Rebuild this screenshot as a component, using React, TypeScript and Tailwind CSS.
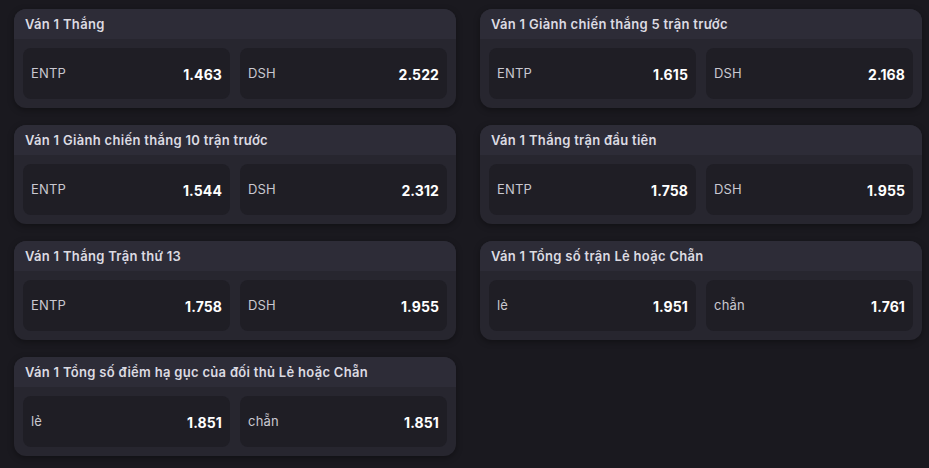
import React from "react";

type Market = { title: string; items: [string, string][] };

const left: Market[] = [
  { title: "Ván 1 Thắng", items: [["ENTP", "1.463"], ["DSH", "2.522"]] },
  { title: "Ván 1 Giành chiến thắng 10 trận trước", items: [["ENTP", "1.544"], ["DSH", "2.312"]] },
  { title: "Ván 1 Thắng Trận thứ 13", items: [["ENTP", "1.758"], ["DSH", "1.955"]] },
  { title: "Ván 1 Tổng số điểm hạ gục của đối thủ Lẻ hoặc Chẵn", items: [["lẻ", "1.851"], ["chẵn", "1.851"]] },
];
const right: Market[] = [
  { title: "Ván 1 Giành chiến thắng 5 trận trước", items: [["ENTP", "1.615"], ["DSH", "2.168"]] },
  { title: "Ván 1 Thắng trận đầu tiên", items: [["ENTP", "1.758"], ["DSH", "1.955"]] },
  { title: "Ván 1 Tổng số trận Lẻ hoặc Chẵn", items: [["lẻ", "1.951"], ["chẵn", "1.761"]] },
];

function Card({ m }: { m: Market }) {
  return (
    <div className="rounded-[12px] overflow-hidden bg-[#27262f] shadow-[0_2px_6px_rgba(0,0,0,0.35)]">
      <div className="h-[30px] bg-[#2d2c37] flex items-center px-[11px] pt-[2px] text-[13px] font-semibold text-[#dcdbe2] tracking-[0.3px]">
        {m.title}
      </div>
      <div className="grid grid-cols-2 gap-[10px] p-[9px]">
        {m.items.map(([l, v]) => (
          <div key={l} className="h-[51px] rounded-[8px] bg-[#1f1e25] flex items-center justify-between px-[8px] pt-[1px]">
            <span className="text-[13px] text-[#c9c8d0] tracking-[0.2px]">{l}</span>
            <span className="text-[14px] font-bold text-white tracking-[0.1px]">{v}</span>
          </div>
        ))}
      </div>
    </div>
  );
}

export default function App() {
  return (
    <div
      className="w-[929px] h-[468px] bg-[#1a191f] pl-[14px] pt-[9px] flex gap-[24px] overflow-hidden"
      style={{ fontFamily: "Inter, 'Noto Sans', sans-serif" }}
    >
      <div className="w-[442px] flex flex-col gap-[17px]">
        {left.map((m) => (
          <Card key={m.title} m={m} />
        ))}
      </div>
      <div className="w-[442px] flex flex-col gap-[17px]">
        {right.map((m) => (
          <Card key={m.title} m={m} />
        ))}
      </div>
    </div>
  );
}
